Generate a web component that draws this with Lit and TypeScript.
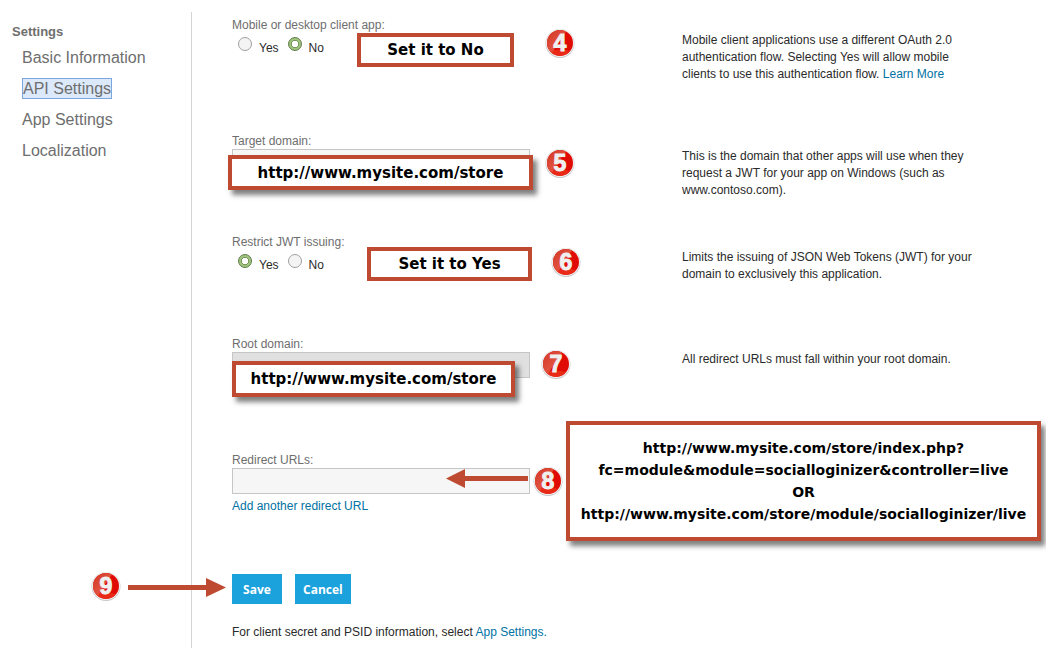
import { LitElement, html, svg, css } from "lit";
import { customElement, property } from "lit/decorators.js";

@customElement("step-badge")
export class StepBadge extends LitElement {
  @property() step = "";

  static styles = css`
    :host {
      display: block;
      width: 30px;
      height: 30px;
    }
    svg {
      display: block;
    }
    text {
      font: 700 23px "Liberation Sans", Arial, sans-serif;
      stroke: #efefef;
      stroke-width: 1px;
    }
  `;

  render() {
    return html`<svg width="30" height="30" viewBox="0 0 30 30" role="img" aria-label="Step ${this.step}">
      <defs>
        <linearGradient id="gloss" x1="0" y1="0" x2="0.9" y2="1">
          <stop offset="0" stop-color="#cf3220" />
          <stop offset="0.5" stop-color="#e0513e" />
          <stop offset="1" stop-color="#dc2c1a" />
        </linearGradient>
        <clipPath id="disc"><circle cx="15" cy="15" r="13" /></clipPath>
      </defs>
      <circle cx="15" cy="15.4" r="14.5" fill="#c8c8c8" />
      <circle cx="15" cy="15" r="14" fill="#f2f2f2" />
      <circle cx="15" cy="15" r="13" fill="#e00b04" />
      <path d="M0 0H26C17 5 14 15 7 25L0 30Z" fill="url(#gloss)" clip-path="url(#disc)" />
      <path d="M5 23Q15 20 25 23Q21 28 15 28Q9 28 5 23Z" fill="#f04a2a" opacity=".5" clip-path="url(#disc)" />
      <text x="15" y="23" text-anchor="middle" fill="#efefef">${this.step}</text>
    </svg>`;
  }
}

const arrowLeft = svg`<path d="M0 10.500L19 1V8H82V13H19V20Z" fill="#be4a32"/>`;
const arrowRight = svg`<path d="M98 10.500L78 1V8H0V13H78V20Z" fill="#be4a32"/>`;

@customElement("app-root")
export class AppRoot extends LitElement {
  static styles = css`
    :host {
      display: block;
      background: #fff;
      color: #2a2a2a;
      font: 12px/16px "Liberation Sans", Arial, sans-serif;
    }
    .page {
      display: grid;
      grid-template-columns: 191px 1fr;
      min-height: 100vh;
      box-sizing: border-box;
      padding-top: 12px;
      overflow: hidden;
    }
    .side {
      padding: 12px 12px 0;
      color: #6e6e6e;
    }
    .side h2 {
      margin: 0;
      font-size: 13px;
      line-height: 16px;
    }
    .side ul {
      list-style: none;
      margin: 7px 0 0;
      padding: 0 0 0 10px;
      display: grid;
      gap: 9px;
      justify-items: start;
    }
    .side li {
      height: 22px;
    }
    .side a {
      display: block;
      color: inherit;
      font-size: 16px;
      line-height: 22px;
    }
    .side a.current {
      background: #dbe9fa;
      line-height: 19px;
      outline: 1px solid #7ba6e0;
      outline-offset: -1px;
      padding: 1px;
    }
    a {
      color: #0072a3;
      text-decoration: none;
    }
    main {
      border-left: 1px solid #d4d4d4;
      padding: 5px 40px 0;
    }
    .fields {
      display: grid;
      grid-template-rows:
        minmax(116px, auto) minmax(101px, auto) minmax(102px, auto)
        minmax(116px, auto) minmax(122px, auto);
    }
    .row {
      position: relative;
      display: grid;
      grid-template-columns: 450px minmax(0, 300px);
      align-items: start;
    }
    .label {
      display: block;
      color: #6e6e6e;
    }
    fieldset {
      border: 0;
      margin: 0;
      padding: 0;
    }
    legend {
      padding: 0;
    }
    .options {
      display: flex;
      gap: 9px;
      padding: 3px 6px 0;
    }
    .options label {
      display: flex;
      gap: 7px;
      line-height: 24px;
    }
    .radio {
      appearance: none;
      box-sizing: border-box;
      width: 14px;
      height: 14px;
      margin: 1px 0 0;
      border: 1px solid #a0a0a0;
      border-radius: 50%;
      background: #f4f4f4;
    }
    .radio:checked {
      border-color: #5f7a48;
      background: radial-gradient(circle, #fff 0 3px, #7b9560 3px 4px, #9fc57d 4px);
    }
    .box {
      box-sizing: border-box;
      display: block;
      width: 298px;
      height: 26px;
      border: 1px solid #c6c6c6;
      background: #f6f6f6;
      padding: 0 6px;
      font: inherit;
      border-radius: 0;
    }
    .box:disabled {
      background: #e0e0e0;
    }
    .help {
      margin: 15px 0 0;
      line-height: 17px;
    }
    .add {
      display: inline-block;
      margin-top: 4px;
    }
    .actions {
      position: relative;
      display: flex;
      gap: 13px;
    }
    .actions button {
      border: 0;
      padding: 0 8px;
      min-width: 50px;
      height: 30px;
      background: #1ba1dc;
      color: #fff;
      font: 700 12px "Open Sans", sans-serif;
    }
    .note {
      margin: 20px 0 0;
    }
    .callout {
      position: absolute;
      box-sizing: border-box;
      display: flex;
      flex-direction: column;
      justify-content: center;
      align-items: center;
      border: 4px solid #be4a32;
      background: #fff;
      color: #000;
      font: 700 15px/22px "DejaVu Sans", Verdana, sans-serif;
      white-space: nowrap;
    }
    .raised {
      box-shadow: 4px 5px 5px rgba(0, 0, 0, 0.5);
    }
    .long {
      font-size: 14px;
      z-index: 1;
    }
    .set-no { left: 125px; top: 16px; width: 157px; height: 34px; }
    .target { left: -4px; top: 22px; width: 305px; height: 35px; }
    .set-yes { left: 135px; top: 13px; width: 165px; height: 34px; }
    .root { left: 0; top: 25px; width: 283px; height: 36px; }
    .redirect { left: 334px; top: -31px; width: 475px; height: 120px; }
    step-badge { position: absolute; }
    .b4 { left: 313px; top: 11px; }
    .b5 { left: 313px; top: 15px; }
    .b6 { left: 319px; top: 13px; }
    .b7 { left: 309px; top: 13px; }
    .b8 { left: 301px; top: 14px; }
    .b9 { left: -141px; top: -3px; }
    .arrow { position: absolute; }
    .to-field { left: 214px; top: 16px; }
    .to-save { left: -104px; top: 3px; }
  `;

  private choice(name: string, legend: string, value: string) {
    return html`<fieldset>
      <legend class="label">${legend}</legend>
      <div class="options">
        ${["Yes", "No"].map(
          (o) => html`<label><input class="radio" type="radio" name=${name} .checked=${o === value} />${o}</label>`
        )}
      </div>
    </fieldset>`;
  }

  render() {
    return html`<div class="page">
      <nav class="side">
        <h2>Settings</h2>
        <ul>
          <li><a href="#basic">Basic Information</a></li>
          <li><a class="current" href="#api" aria-current="page">API Settings</a></li>
          <li><a href="#app">App Settings</a></li>
          <li><a href="#localization">Localization</a></li>
        </ul>
      </nav>
      <main>
        <div class="fields">
          <div class="row">
            ${this.choice("mobile", "Mobile or desktop client app:", "No")}
            <p class="help">
              Mobile client applications use a different OAuth 2.0 authentication flow. Selecting Yes
              will allow mobile clients to use this authentication flow. <a href="#learn">Learn More</a>
            </p>
            <div class="callout set-no">Set it to No</div>
            <step-badge class="b4" step="4"></step-badge>
          </div>
          <div class="row">
            <div>
              <label class="label" for="target">Target domain:</label>
              <input class="box" id="target" type="text" />
            </div>
            <p class="help">
              This is the domain that other apps will use when they request a JWT for your app on
              Windows (such as www.contoso.com).
            </p>
            <div class="callout raised target">http://www.mysite.com/store</div>
            <step-badge class="b5" step="5"></step-badge>
          </div>
          <div class="row">
            ${this.choice("restrict", "Restrict JWT issuing:", "Yes")}
            <p class="help">
              Limits the issuing of JSON Web Tokens (JWT) for your domain to exclusively this application.
            </p>
            <div class="callout set-yes">Set it to Yes</div>
            <step-badge class="b6" step="6"></step-badge>
          </div>
          <div class="row">
            <div>
              <label class="label" for="root">Root domain:</label>
              <input class="box" id="root" type="text" disabled />
            </div>
            <p class="help">All redirect URLs must fall within your root domain.</p>
            <div class="callout raised root">http://www.mysite.com/store</div>
            <step-badge class="b7" step="7"></step-badge>
          </div>
          <div class="row">
            <div>
              <label class="label" for="redirect">Redirect URLs:</label>
              <input class="box" id="redirect" type="text" />
              <a class="add" href="#add">Add another redirect URL</a>
            </div>
            <svg class="arrow to-field" width="82" height="20">${arrowLeft}</svg>
            <step-badge class="b8" step="8"></step-badge>
            <div class="callout raised long redirect">
              <span>http://www.mysite.com/store/index.php?</span>
              <span>fc=module&amp;module=socialloginizer&amp;controller=live</span>
              <span>OR</span>
              <span>http://www.mysite.com/store/module/socialloginizer/live</span>
            </div>
          </div>
        </div>
        <div class="actions">
          <button type="button">Save</button>
          <button type="button">Cancel</button>
          <step-badge class="b9" step="9"></step-badge>
          <svg class="arrow to-save" width="98" height="20">${arrowRight}</svg>
        </div>
        <p class="note">
          For client secret and PSID information, select <a href="#app">App Settings.</a>
        </p>
      </main>
    </div>`;
  }
}
